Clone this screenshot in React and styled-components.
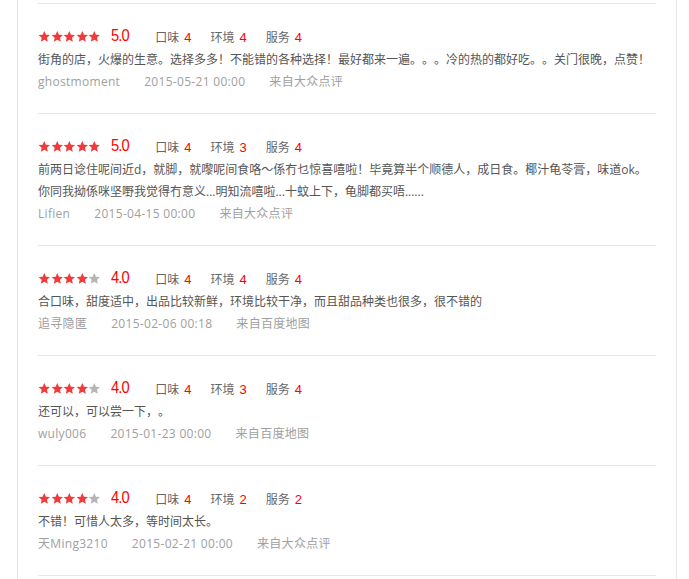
import React from "react";
import styled, { createGlobalStyle } from "styled-components";

const GlobalStyle = createGlobalStyle`
  body {
    margin: 0;
    background: #fff;
    font-family: "Open Sans", "Noto Sans CJK SC", sans-serif;
    text-spacing-trim: space-all;
  }
`;

const Panel = styled.div`
  margin-left: 17px;
  width: 618px;
  min-height: 579px;
  padding: 3px 20px 0;
  border-left: 1px solid #e6e6e6;
  border-right: 1px solid #e6e6e6;
`;

const List = styled.ul`
  list-style: none;
  margin: 0;
  padding: 0;
  border-bottom: 1px solid #e6e6e6;
`;

const Review = styled.li`
  border-top: 1px solid #e6e6e6;
  padding: 21px 0 20px;
`;

const ScoreRow = styled.div`
  display: flex;
  align-items: center;
  height: 22px;
  margin-bottom: 2px;
`;

const Stars = styled.span`
  display: flex;
  gap: 0;
`;

const Score = styled.span`
  margin-left: 10px;
  margin-right: 25px;
  color: #f00;
  font-family: "Liberation Sans", sans-serif;
  font-size: 16px;
  letter-spacing: -1px;
  transform: scaleX(0.92);
  transform-origin: left center;
`;

const Item = styled.span`
  margin-right: 19px;
  font-size: 12px;
  color: #666;
  font-family: "Noto Sans CJK SC", sans-serif;
`;

const Num = styled.span`
  margin-left: 5px;
  color: #f00;
  font-family: "Liberation Sans", sans-serif;
  font-size: 13px;
`;

const Comment = styled.p`
  margin: 0;
  font-size: 12px;
  line-height: 22px;
  color: #555;
  text-spacing-trim: space-all;
`;

const Meta = styled.div`
  display: flex;
  gap: 24px;
  font-size: 12px;
  line-height: 22px;
  letter-spacing: 0.3px;
  color: #a0a0a0;
`;

const Star = ({ on }) => (
  <svg width="12.6" height="13" viewBox="0 0 24 24">
    <polygon
      points="12,1.5 15.1,8.6 22.8,9.3 17,14.4 18.7,22 12,18 5.3,22 7,14.4 1.2,9.3 8.9,8.6"
      fill={on ? "#f23a3a" : "#b5b5b5"}
    />
  </svg>
);

const reviews = [
  {
    stars: 5,
    score: "5.0",
    taste: 4,
    env: 4,
    service: 4,
    text: ["街角的店，火爆的生意。选择多多！不能错的各种选择！最好都来一遍。。。冷的热的都好吃。。关门很晚，点赞！"],
    user: "ghostmoment",
    date: "2015-05-21 00:00",
    from: "来自大众点评",
  },
  {
    stars: 5,
    score: "5.0",
    taste: 4,
    env: 3,
    service: 4,
    text: [
      "前两日谂住呢间近d，就脚，就嚟呢间食咯～係冇乜惊喜嘻啦！毕竟算半个顺德人，成日食。椰汁龟苓膏，味道ok。",
      "你同我拗係咪坚嘢我觉得冇意义...明知流嘻啦...十蚊上下，龟脚都买唔......",
    ],
    user: "Lifien",
    date: "2015-04-15 00:00",
    from: "来自大众点评",
  },
  {
    stars: 4,
    score: "4.0",
    taste: 4,
    env: 4,
    service: 4,
    text: ["合口味，甜度适中，出品比较新鲜，环境比较干净，而且甜品种类也很多，很不错的"],
    user: "追寻隐匿",
    date: "2015-02-06 00:18",
    from: "来自百度地图",
  },
  {
    stars: 4,
    score: "4.0",
    taste: 4,
    env: 3,
    service: 4,
    text: ["还可以，可以尝一下，。"],
    user: "wuly006",
    date: "2015-01-23 00:00",
    from: "来自百度地图",
  },
  {
    stars: 4,
    score: "4.0",
    taste: 4,
    env: 2,
    service: 2,
    text: ["不错！可惜人太多，等时间太长。"],
    user: "天Ming3210",
    date: "2015-02-21 00:00",
    from: "来自大众点评",
  },
];

export default function App() {
  return (
    <>
      <GlobalStyle />
      <Panel>
        <List>
          {reviews.map((r, i) => (
            <Review key={i}>
              <ScoreRow>
                <Stars>
                  {[0, 1, 2, 3, 4].map((n) => (
                    <Star key={n} on={n < r.stars} />
                  ))}
                </Stars>
                <Score>{r.score}</Score>
                <Item>
                  口味<Num>{r.taste}</Num>
                </Item>
                <Item>
                  环境<Num>{r.env}</Num>
                </Item>
                <Item>
                  服务<Num>{r.service}</Num>
                </Item>
              </ScoreRow>
              <Comment>
                {r.text.map((t, k) => (
                  <React.Fragment key={k}>
                    {k > 0 && <br />}
                    {t}
                  </React.Fragment>
                ))}
              </Comment>
              <Meta>
                <span>{r.user}</span>
                <span>{r.date}</span>
                <span>{r.from}</span>
              </Meta>
            </Review>
          ))}
        </List>
      </Panel>
    </>
  );
}
